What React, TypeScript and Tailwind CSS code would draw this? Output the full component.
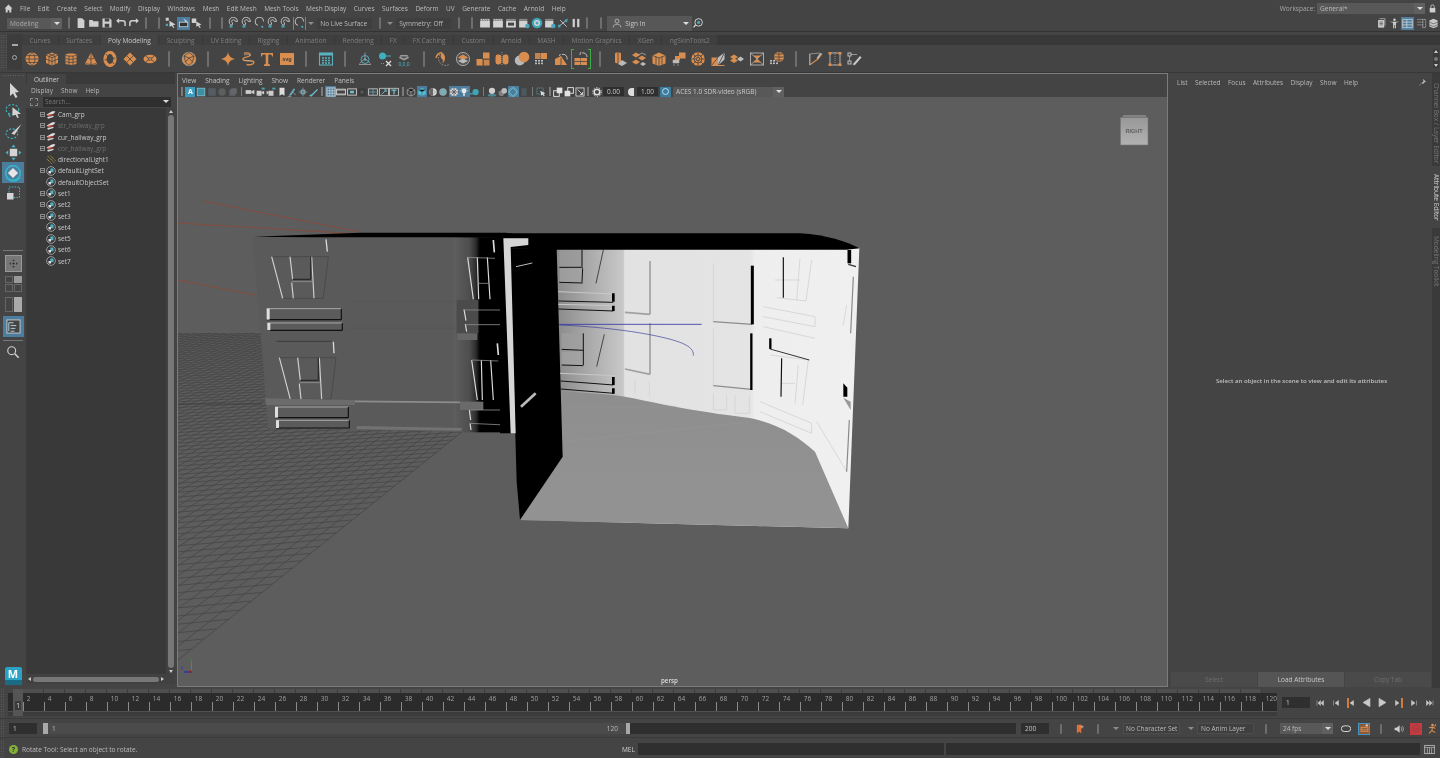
import React from "react";

const OR = "#d98e4f";
const DK = "#444444";
const TEAL = "#3fb7c6";

const menus = ["File","Edit","Create","Select","Modify","Display","Windows","Mesh","Edit Mesh","Mesh Tools","Mesh Display","Curves","Surfaces","Deform","UV","Generate","Cache","Arnold","Help"];
const tabs = ["Curves","Surfaces","Poly Modeling","Sculpting","UV Editing","Rigging","Animation","Rendering","FX","FX Caching","Custom","Arnold","MASH","Motion Graphics","XGen","ngSkinTools2"];

function S({ children, size = 16, vb = 16, className = "" }: { children: React.ReactNode; size?: number; vb?: number; className?: string }) {
  return <svg width={size} height={size} viewBox={`0 0 ${vb} ${vb}`} className={`shrink-0 ${className}`}>{children}</svg>;
}

function Sep({ h = "h-[12px]" }: { h?: string }) {
  return <div className={`w-[2px] ${h} bg-[#6e6e6e] rounded-sm`} />;
}

function ShelfIcon({ k }: { k: string }) {
  const ln = { stroke: DK, strokeWidth: 0.8, fill: "none" };
  switch (k) {
    case "sphere": return <S><circle cx="8" cy="8" r="6.5" fill={OR} /><path d="M1.6 8h12.8M2.6 4.6h10.8M2.6 11.4h10.8M8 1.5c-4 3-4 10 0 13M8 1.5c4 3 4 10 0 13" {...ln} /></S>;
    case "cube": return <S><path d="M8 1.5l6 2.6v7.8l-6 2.6-6-2.6V4.100z" fill={OR} /><path d="M2 4.100l6 2.600 6-2.600M8 6.700v7.800M2 8l6 2.500L14 8M5 5.400v7.500M11 5.400v7.500M5 2.800l6 2.600M11 2.800L5 5.400" {...ln} /></S>;
    case "cyl": return <S><path d="M2.500 3.500C2.500 2 13.500 2 13.500 3.500v9c0 1.800-11 1.800-11 0z" fill={OR} /><path d="M2.500 3.800c0 1.800 11 1.800 11 0M2.500 7c0 1.800 11 1.800 11 0M2.500 10c0 1.800 11 1.800 11 0M6 5v9M10 5v9" {...ln} /></S>;
    case "cone": return <S><path d="M8 1.500L14 12.500c0 2-12 2-12 0z" fill={OR} /><path d="M8 1.500v12.500M5 7c1 1.200 5 1.200 6 0M2.500 12c1 1.800 10 1.800 11 0" {...ln} /></S>;
    case "torus": return <S><ellipse cx="8" cy="8" rx="5" ry="6.500" fill="none" stroke={OR} strokeWidth="3.200" /><path d="M4 3l2 2.500M12 13l-2-2.500M2.500 9l3-.5M13.500 7l-3 .5" {...ln} /></S>;
    case "plane": return <S><path d="M8 1.500L14.500 8 8 14.500 1.500 8z" fill={OR} /><path d="M4.800 4.800l6.400 6.400M11.200 4.800l-6.400 6.400" {...ln} /></S>;
    case "disc": return <S><ellipse cx="8" cy="8" rx="6.500" ry="4.200" fill={OR} /><ellipse cx="8" cy="8" rx="2" ry="1.300" {...ln} /><path d="M3.500 5l3 2M12.500 5l-3 2M3.500 11l3-2M12.500 11l-3-2" {...ln} /></S>;
    case "ball": return <S><circle cx="8" cy="8" r="6.800" fill={OR} stroke="#aaa" strokeWidth=".6" /><path d="M8 1.500L3 5l1.500 6L8 14.500l3.500-3.500L13 5zM3 5l5 2 5-2M8 7l-3.500 4M8 7l3.500 4" {...ln} /></S>;
    case "star": return <S><path d="M8 .8c.6 4.200 2.400 6.200 7 7.200-4.600 1-6.400 3-7 7.200-.6-4.200-2.400-6.200-7-7.200 4.600-1 6.400-3 7-7.200z" fill={OR} /></S>;
    case "swirl": return <S><path d="M4 2.500c3-1.500 7 0 6 2S2 6 3 8.500s9 0 10.500 2-2 4-7 3" fill="none" stroke={OR} strokeWidth="1.400" /><path d="M4 4c3-1 6 0 7 .5M4 9.500c3 0 6 0 8 1.500" fill="none" stroke="#b6b6b6" strokeWidth=".6" /></S>;
    case "T": return <S><path d="M2 2h12v3.500h-1c0-1.200-.5-2-1.500-2H9.300v9.500l1.700.6V15H5v-1.400l1.700-.6V3.500H4.500c-1 0-1.500.8-1.500 2H2z" fill={OR} /></S>;
    case "svg": return <S><rect x="1" y="2" width="14" height="12" fill={OR} /><text x="8" y="10" fontSize="5.500" textAnchor="middle" fill="#3b3b3b" fontWeight="700" fontFamily="Liberation Sans, sans-serif">svg</text></S>;
    case "cal": return <S><rect x="1.500" y="2" width="13" height="12" fill="none" stroke="#58b2c2" strokeWidth="1.100" /><rect x="1.500" y="2" width="13" height="2.500" fill="#58b2c2" /><path d="M4 7h2M7 7h2M10 7h2M4 9.500h2M7 9.500h2M10 9.500h2M4 12h2M7 12h2M10 12h2" stroke="#58b2c2" strokeWidth="1.300" /></S>;
    case "loc": return <S><path d="M8 1.500v6M8 7.500l-5.500 5M8 7.500l5.500 5M2 13.500h12" stroke="#b5b5b5" strokeWidth=".7" fill="none" /><circle cx="8" cy="8.500" r="4" fill="none" stroke="#58b2c2" strokeWidth=".9" /><circle cx="8" cy="8.500" r="1.200" fill="#58b2c2" /></S>;
    case "pin": return <S><circle cx="5.500" cy="5" r="3.500" fill="#3fb0c0" /><path d="M5.500 5H14" stroke="#3fb0c0" /><path d="M9 10l5 5M14 10l-5 5" stroke="#ddd" strokeWidth="1.300" /><path d="M4 12.500h3" stroke="#3fb0c0" strokeDasharray="1 1" /></S>;
    case "xf": return <S><path d="M8 1.500v4M4 5.500l4 2 4-2M4.500 4h7l1.500 3-5 2.500L3 7z" fill="#9c9c9c" /><text x="8" y="15" fontSize="5" textAnchor="middle" fill="#4fb0c0" fontFamily="Liberation Sans, sans-serif">0,0,0</text></S>;
    case "crescent": return <S><path d="M7 1.500a6.500 6.500 0 0 1 0 11c1-2 1.500-3 0-4.500-1.500-1.500-2-3 0-6.500z" fill={OR} /><path d="M7 1.500a6.500 6.500 0 1 0 7 12" fill="none" stroke="#b9b9b9" strokeWidth=".8" strokeDasharray="1.400 1.400" /><path d="M1 7a7 7 0 0 1 6-5.500" stroke={OR} fill="none" strokeWidth="1.500" /></S>;
    case "sep2": return <S><circle cx="8" cy="8" r="6.600" fill="#555" stroke="#bbb" strokeWidth=".8" /><path d="M8 3.500L13 6.500 8 9 3 6.500z" fill={OR} /><path d="M8 7.500L13 10 8 12.500 3 10z" fill="#b9b9b9" /></S>;
    case "blocks": return <S><rect x="8" y="1.500" width="6.500" height="6.500" fill={OR} /><rect x="1.500" y="8" width="6.500" height="6.500" fill={OR} /><rect x="8.500" y="8.500" width="6" height="6" fill={OR} opacity=".9" /><path d="M8 8v6.500M8 8h6.500" {...ln} /></S>;
    case "cylcut": return <S><rect x="1.500" y="3.500" width="5.800" height="10" rx="2.400" fill={OR} /><rect x="8.700" y="3.500" width="5.800" height="10" rx="2.400" fill={OR} /><path d="M8 1v14" stroke="#c0c0c0" strokeWidth=".6" strokeDasharray="1 1" /></S>;
    case "union": return <S><circle cx="5.800" cy="9.500" r="5" fill="#b9b9b9" /><circle cx="10" cy="6" r="5.300" fill={OR} /></S>;
    case "gridq": return <S><rect x="7.500" y="2" width="6.500" height="6" fill={OR} /><rect x="2" y="2" width="5" height="6" fill={OR} opacity=".85" /><g fill="#bcbcbc"><rect x="2" y="9" width="2" height="1.600" /><rect x="5" y="9" width="2" height="1.600" /><rect x="8" y="9" width="2" height="1.600" /><rect x="2" y="11.600" width="2" height="1.600" /><rect x="5" y="11.600" width="2" height="1.600" /><rect x="8" y="11.600" width="2" height="1.600" /></g></S>;
    case "rot": return <S><path d="M2 14L2 8l6-3 6 9z" fill={OR} /><path d="M8 14V7" {...ln} /><path d="M9 3.500a4 4 0 0 1 5 5M6.500 5a4 4 0 0 1 1-2" fill="none" stroke="#c9c9c9" strokeWidth=".9" /></S>;
    case "rotg": return <svg width="20" height="20" viewBox="0 0 20 20" className="shrink-0"><path d="M1 1H0v18h1zM19 1h1v18h-1zM0 0h3v1H0zM17 0h3v1h-3zM0 19h3v1H0zM17 19h3v1h-3z" fill="#3fae49" /><rect x="3.500" y="9" width="6" height="7" fill={OR} /><rect x="10" y="9" width="6" height="7" fill={OR} /><path d="M3.500 12.500h12.500" {...ln} /><path d="M11 4a4 4 0 0 1 5 4M9 6a4 4 0 0 1 1-3" fill="none" stroke="#c9c9c9" strokeWidth=".9" /></svg>;
    case "pipe": return <S><path d="M3 2.500c0-1.200 6-1.200 6 0v9c0 1-6 1-6 0z" fill={OR} /><path d="M6 1.500v11" {...ln} /><path d="M6 13l4-4 5 3-5 3z" fill="#b9b9b9" /></S>;
    case "stack": return <S><path d="M1 4l4-2.500 4 2.500-4 2.500z" fill={OR} /><path d="M7 7l4-2.500L15 7l-4 2.500z" fill={OR} /><path d="M1 11l4-2.500L9 11l-4 2.500z" fill={OR} /><path d="M7 4l4-2 4 2" stroke="#ccc" strokeWidth=".6" fill="none" /><path d="M9 13l3-2 3 2-3 2z" fill="#bbb" /></S>;
    case "box3": return <S><path d="M8 1.500l6.500 3v8L8 15l-6.500-2.500v-8z" fill={OR} /><path d="M1.500 4.500L8 7l6.500-2.500M8 7v8M5 5.800v8M11 5.800v8" {...ln} /></S>;
    case "chair": return <S><rect x="8" y="1.500" width="6.500" height="6" fill={OR} /><rect x="4" y="5" width="5" height="4" fill={OR} /><path d="M2 9h6v3H2zM3 13v2M7 13v2" fill="#bcbcbc" stroke="#bcbcbc" strokeWidth=".5" /></S>;
    case "soccer": return <S><circle cx="8" cy="8" r="6.800" fill={OR} /><circle cx="8" cy="8" r="4" {...ln} /><circle cx="8" cy="8" r="1.600" {...ln} /><path d="M8 1.200v5M8 9.800v5M1.200 8h5M9.800 8h5M3 3l3.500 3.500M13 3L9.500 6.500M3 13l3.500-3.500M13 13L9.500 9.500" {...ln} /></S>;
    case "split": return <S><path d="M1.500 14.500V6.500L8 6.500v8z" fill={OR} /><path d="M8 6.500l6.500-5v7L8 14.500z" fill="#bdbdbd" /><path d="M1.500 14.500L8 6.500M8 14.500l6.500-13" {...ln} /><path d="M1.500 14.500h13" stroke={OR} /></S>;
    case "diam": return <S><path d="M1 6l4-2.500L9 6 5 8.500z" fill={OR} /><path d="M1 9.500l4-2.500 4 2.500L5 12z" fill={OR} /><path d="M8 8l3.500-2.500L15 8l-3.500 2.500z" fill="#bdbdbd" /></S>;
    case "xbox": return <S><rect x="1.500" y="2" width="13" height="12" fill="none" stroke="#c2c2c2" strokeWidth=".8" /><path d="M1.500 2l13 12M14.500 2l-13 12" stroke="#c2c2c2" strokeWidth=".7" /><path d="M8 8L4 4.500h8z" fill={OR} /><path d="M8 8l-4 3.500h8z" fill={OR} /></S>;
    case "globe": return <S><circle cx="10" cy="6" r="5" fill={OR} /><path d="M5 6h10M10 1v10M6.500 3h7M6.500 9h7" {...ln} /><g fill="#bcbcbc"><rect x="1" y="9" width="2" height="1.600" /><rect x="4" y="9" width="2" height="1.600" /><rect x="1" y="11.500" width="2" height="1.600" /><rect x="4" y="11.500" width="2" height="1.600" /><rect x="7" y="11.500" width="2" height="1.600" /></g></S>;
    case "pen1": return <S><path d="M1.500 14L10 8M10 8l4-5" stroke={OR} strokeWidth="1.100" /><path d="M10 8l4-6-2 .2-3.500 5z" fill="#bdbdbd" /><rect x="1" y="3" width="1.500" height="11" fill="#9a9a9a" /><path d="M1.500 3L12 2" stroke="#bdbdbd" strokeWidth=".6" /></S>;
    case "frame": return <S><rect x="3" y="2" width="10" height="12" fill="none" stroke="#bdbdbd" strokeWidth=".9" /><path d="M8 1v14" stroke="#bdbdbd" strokeWidth=".6" strokeDasharray="1 1" /><g fill={OR}><rect x="1.500" y="1" width="3" height="2.500" /><rect x="11.500" y="1" width="3" height="2.500" /><rect x="1.500" y="12.500" width="3" height="2.500" /><rect x="11.500" y="12.500" width="3" height="2.500" /></g></S>;
    case "pen2": return <S><rect x="1" y="2" width="3" height="3" fill="none" stroke="#bdbdbd" /><rect x="1" y="10" width="3" height="3" fill="none" stroke="#bdbdbd" /><path d="M4 3.500h6M2.500 5v5" stroke="#bdbdbd" strokeWidth=".7" /><path d="M6 13l7-8 1.500 1.500-7 8z" fill="#c9c9c9" /><path d="M5.500 14l.5-1.500 1.500 1.500z" fill={OR} /></S>;
    default: return null;
  }
}

const shelfItems = ["sphere","cube","cyl","cone","torus","plane","disc","|","ball","|","star","swirl","T","svg","|","cal","|","loc","pin","xf","|","crescent","sep2","blocks","cylcut","union","gridq","rot","rotg","|","pipe","stack","box3","chair","soccer","split","diam","xbox","globe","|","pen1","frame","pen2"];

function Mini({ k }: { k: string }) {
  const c = "#bdbdbd";
  switch (k) {
    case "file": return <S size={12}><path d="M3.500 1.500h6l3 3v10h-9z" fill="#d0d0d0" /></S>;
    case "open": return <S size={12}><path d="M1.500 4h4.500l1 1.500h7V13h-12.500z" fill="#cfcfcf" /></S>;
    case "save": return <S size={12}><path d="M2 2h10l2 2v10H2z" fill="#cfcfcf" /><rect x="5" y="2" width="6" height="4" fill="#444" /><rect x="5" y="9" width="6" height="5" fill="#444" /></S>;
    case "undo": return <S size={12}><path d="M13.500 12V8c0-2-1-3-3-3H3" fill="none" stroke="#cfcfcf" strokeWidth="2" /><path d="M5.500 1.500L1.500 5l4 3.500z" fill="#cfcfcf" /></S>;
    case "redo": return <S size={12}><path d="M2.500 12V8c0-2 1-3 3-3H13" fill="none" stroke="#cfcfcf" strokeWidth="2" /><path d="M10.500 1.500l4 3.500-4 3.500z" fill="#cfcfcf" /></S>;
    case "sel1": return <S size={12}><rect x="1" y="1" width="4" height="4" fill="#cfcfcf" /><path d="M6 5l8 5-3.500 1 2 3-1.500.8-2-3L6 13z" fill="#cfcfcf" /><rect x="1" y="9" width="3" height="3" fill="#4ba4b8" /></S>;
    case "sel2": return <S size={12}><path d="M7 2l6 4-2.500.8 1.500 2.500" fill="#dcdcdc" /><rect x="2" y="7" width="11" height="6" fill="#333" stroke="#d8d8d8" /></S>;
    case "sel3": return <S size={12}><rect x="1" y="2" width="6" height="6" fill="#cfcfcf" /><path d="M7 6l7 4-3 1 2 3-1.500.8-2-3L7 13z" fill="#cfcfcf" /></S>;
    case "mag": return <S size={12}><path d="M4 9a5.500 5.500 0 1 1 9 0l-2.500-2a2.300 2.300 0 1 0-4 0z" fill="none" stroke={c} strokeWidth="1.200" transform="rotate(-35 8 8)" /><rect x="2" y="11" width="4" height="3" fill="#4ba4b8" /></S>;
    case "play3": return <S size={12}><path d="M4 9a5.500 5.500 0 1 1 9 0" fill="none" stroke={c} strokeWidth="1.300" transform="rotate(-35 8 8)" /><circle cx="11" cy="13" r="1.500" fill="#4ba4b8" /></S>;
    case "clap": return <S size={12}><rect x="1.500" y="5" width="13" height="9" fill="#d2d2d2" /><path d="M1.500 2.500h13V5h-13z" fill="#888" /><path d="M3 2.500l1 2.500M6 2.500l1 2.500M9 2.500l1 2.500M12 2.500l1 2.500" stroke="#e6e6e6" /></S>;
    case "clapd": return <S size={12}><rect x="1.500" y="5" width="13" height="9" fill="#d2d2d2" /><path d="M1.500 2.500h13V5h-13z" fill="#888" /><rect x="4" y="7.500" width="8" height="4" fill="#444" /></S>;
    case "clapg": return <S size={12}><rect x="1.500" y="5" width="11" height="9" fill="#d2d2d2" /><path d="M1.500 2.500h11V5h-11z" fill="#888" /><circle cx="12.500" cy="12" r="3" fill="#4ba4b8" /></S>;
    case "disc": return <S size={12}><circle cx="8" cy="8" r="7" fill="#3ea6b6" /><circle cx="8" cy="8" r="4" fill="#d7d7d7" /><circle cx="8" cy="8" r="2" fill="#3ea6b6" /></S>;
    case "branch": return <S size={12}><path d="M2 13L14 3M4 4l9 9" stroke="#d0d0d0" strokeWidth="1.100" /><circle cx="3" cy="12" r="2" fill="#3ea6b6" /><circle cx="12" cy="5" r="2" fill="#3ea6b6" /></S>;
    case "pause": return <S size={12}><rect x="3.500" y="2.500" width="3" height="11" fill="#cfcfcf" /><rect x="9.500" y="2.500" width="3" height="11" fill="#cfcfcf" /></S>;
    default: return null;
  }
}

function Tiny({ k }: { k: string }) {
  switch (k) {
    case "A": return <div className="w-[10px] h-[10px] bg-[#3c9cc0] flex items-center justify-center text-[7px] font-bold text-white leading-none">A</div>;
    case "sq": return <S size={10}><rect x="2" y="2" width="12" height="12" fill="#3c8fa2" stroke="#77bccb" strokeWidth="1.500" /></S>;
    case "dimsq": return <S size={10}><rect x="2" y="2" width="12" height="12" fill="#545c66" /></S>;
    case "dimsp": return <S size={10}><circle cx="8" cy="8" r="6" fill="#5b5f60" /></S>;
    case "dimim": return <S size={10}><rect x="2" y="4" width="10" height="10" fill="#5d6368" /><rect x="5" y="2" width="9" height="9" fill="#666" /></S>;
    case "cam": return <S size={10}><rect x="1" y="5" width="9" height="6" fill="#cdcdcd" /><path d="M10 7l5-2.500v7L10 9z" fill="#cdcdcd" /></S>;
    case "cam2": return <S size={10}><rect x="1" y="6" width="8" height="8" fill="#cdcdcd" /><path d="M9 8l4-2v6l-4-2z" fill="#cdcdcd" /><rect x="9" y="1" width="5" height="3" fill="#4ea4b6" /></S>;
    case "cam3": return <S size={10}><rect x="4" y="6" width="8" height="8" fill="#cdcdcd" /><path d="M4 8L1 6v6l3-2z" fill="#cdcdcd" /><rect x="10" y="1" width="5" height="3" fill="#4ea4b6" /></S>;
    case "book": return <S size={10}><path d="M4 1h8v13l-4-2.500L4 14z" fill="#dcdcdc" /></S>;
    case "pen": return <S size={10}><path d="M3 13L11 2l2 2-7 10z" fill="#5eb0c2" /><path d="M1 15h6" stroke="#bbb" /><path d="M9 8l5 5" stroke="#bbb" /></S>;
    case "cross": return <S size={10}><path d="M8 1v14M1 8h14" stroke="#5eb0c2" strokeWidth="1.300" /><rect x="5" y="5" width="6" height="6" fill="none" stroke="#ccc" /></S>;
    case "brush": return <S size={10}><path d="M2 14L13 3l1.500 1.500L4 15z" fill="#6cc0d0" /><circle cx="2.500" cy="13.500" r="1.500" fill="#6cc0d0" /></S>;
    case "grid": return <S size={10}><rect x="1.500" y="1.500" width="13" height="13" fill="none" stroke="#dcdcdc" strokeWidth="1.300" /><path d="M6 2v12M10 2v12M2 6h12M2 10h12" stroke="#dcdcdc" /></S>;
    case "film": return <S size={10}><rect x="1" y="3.500" width="14" height="9" fill="none" stroke="#dcdcdc" strokeWidth="1.400" /><path d="M1 5h14M1 11h14" stroke="#dcdcdc" /></S>;
    case "fr": return <S size={10}><rect x="1" y="3" width="14" height="10" fill="none" stroke="#dcdcdc" strokeWidth="1.300" /><rect x="5" y="6" width="6" height="4" fill="#6fc2d2" /></S>;
    case "dark": return <S size={10}><rect x="2" y="2" width="12" height="12" rx="2" fill="#3a3a3a" /><circle cx="8" cy="8" r="3" fill="#555" /></S>;
    case "safe": return <S size={10}><rect x="1" y="3" width="14" height="10" fill="none" stroke="#dcdcdc" strokeWidth="1.200" /><path d="M8 3v10M1 8h14" stroke="#6fc2d2" /></S>;
    case "exp": return <S size={10}><rect x="1" y="2" width="14" height="12" fill="none" stroke="#dcdcdc" strokeWidth="1.200" /><path d="M4 12l7-7M8 4.500h3.500V8" stroke="#6fc2d2" strokeWidth="1.400" fill="none" /></S>;
    case "tt": return <S size={10}><rect x="1" y="2" width="14" height="12" fill="none" stroke="#dcdcdc" strokeWidth="1.200" /><path d="M4 5h8M8 5v7" stroke="#6fc2d2" strokeWidth="2" /></S>;
    case "wire": return <S size={10}><path d="M8 1.500l6 3v7l-6 3-6-3v-7z" fill="none" stroke="#bcbcbc" /><path d="M2 4.500l6 3 6-3M8 7.500v7" stroke="#bcbcbc" /></S>;
    case "solid": return <S size={10}><path d="M8 1.500l6 3v7l-6 3-6-3v-7z" fill="#56bcd0" /><path d="M2 4.500l6 3 6-3M8 7.500v7" stroke="#2d6b7a" /></S>;
    case "half": return <S size={10}><circle cx="8" cy="8" r="6" fill="#dcdcdc" /><path d="M8 2a6 6 0 0 0 0 12z" fill="#666" /><path d="M8 4l4 4-4 4" fill="none" stroke="#888" /></S>;
    case "tex": return <S size={10}><circle cx="8" cy="8" r="6" fill="#8fa4a8" /><path d="M2 8h12M8 2v12M4 4l8 8" stroke="#5fbdcc" /></S>;
    case "chk": return <S size={10}><circle cx="8" cy="8" r="6.500" fill="#dcdcdc" /><path d="M4 4l8 8M12 4l-8 8M8 1.500v13M1.500 8h13" stroke="#555" strokeWidth="1.300" /></S>;
    case "bulb": return <S size={10}><circle cx="8" cy="6" r="4" fill="#e8e8e8" /><rect x="6.500" y="10" width="3" height="4" fill="#ddd" /><path d="M1 6h2M13 6h2M3 1.500l1.500 1.500M13 1.500L11.500 3" stroke="#ddd" /></S>;
    case "teal": return <S size={10}><circle cx="9" cy="8" r="5" fill="#3ea6b6" /><path d="M0 11h5" stroke="#3ea6b6" strokeWidth="2" /></S>;
    case "ground": return <S size={10}><circle cx="8" cy="6" r="5" fill="#cfcfcf" /><ellipse cx="8" cy="13" rx="7" ry="2" fill="#4d8897" /></S>;
    case "ghost": return <S size={10}><circle cx="5.500" cy="10" r="4.500" fill="#818181" /><circle cx="10" cy="6" r="4.500" fill="#bbb" /></S>;
    case "hex": return <S size={10}><path d="M8 1l6.500 7L8 15 1.500 8z" fill="none" stroke="#74c3d4" strokeWidth="1.300" /><circle cx="8" cy="8" r="6.800" fill="none" stroke="#74c3d4" /></S>;
    case "dimdk": return <S size={10}><rect x="4" y="2" width="8" height="12" fill="#4c5a5e" /></S>;
    case "selc": return <S size={10}><rect x="1.500" y="1.500" width="10" height="10" fill="none" stroke="#5eb0c2" strokeDasharray="2 1" /><path d="M7 6l8 4-3 1 2 3-1.500 1-2-3-2 2z" fill="#dcdcdc" /></S>;
    case "dup": return <S size={10}><rect x="1" y="6" width="9" height="9" fill="none" stroke="#e2e2e2" strokeWidth="1.500" /><rect x="6" y="1" width="9" height="9" fill="#e2e2e2" /></S>;
    case "dup2": return <S size={10}><rect x="1" y="6" width="9" height="9" fill="#e2e2e2" /><rect x="6" y="1" width="9" height="9" fill="none" stroke="#e2e2e2" strokeWidth="1.500" /></S>;
    case "dup3": return <S size={10}><rect x="1.500" y="1.500" width="13" height="13" fill="none" stroke="#e2e2e2" strokeWidth="1.300" /><path d="M4 4l8 8M8 12h4V8" stroke="#e2e2e2" strokeWidth="1.300" fill="none" /></S>;
    case "gear": return <S size={10}><circle cx="8" cy="8" r="4.500" fill="none" stroke="#e0e0e0" strokeWidth="2.500" /><circle cx="8" cy="8" r="7" fill="none" stroke="#e0e0e0" strokeWidth="1.500" strokeDasharray="2 2.400" /></S>;
    default: return null;
  }
}

type VT = { k: string; sel?: boolean };
const vt: VT[] = [{k:"|"},{k:"A"},{k:"sq"},{k:"dimsq"},{k:"dimsp"},{k:"dimim"},{k:"|"},{k:"cam"},{k:"cam2"},{k:"cam3"},{k:"book"},{k:"pen"},{k:"cross"},{k:"brush"},{k:"|"},{k:"grid",sel:true},{k:"film"},{k:"fr"},{k:"dark"},{k:"safe"},{k:"exp"},{k:"tt"},{k:"|"},{k:"wire"},{k:"solid",sel:true},{k:"half"},{k:"tex"},{k:"chk",sel:true},{k:"bulb",sel:true},{k:"teal"},{k:"|"},{k:"ground"},{k:"ghost"},{k:"hex",sel:true},{k:"dimdk"},{k:"|"},{k:"selc"},{k:"|"},{k:"dup"},{k:"dup2"},{k:"dup3"},{k:"|"},{k:"gear"}];

function Tool({ children, sel }: { children: React.ReactNode; sel?: boolean }) {
  return <div className={`w-[22px] h-[20.600px] flex items-center justify-center ${sel ? "bg-[#4d7d9c]" : ""}`}>{children}</div>;
}

function Grip({ className = "" }: { className?: string }) {
  return <div className={`bg-[radial-gradient(#6b6b6b_0.6px,transparent_0.7px)] bg-[length:2.500px_2.500px] ${className}`} />;
}

function Combo({ text, cls, arrow = true }: { text: string; cls: string; arrow?: boolean }) {
  return (
    <div className={`flex items-center bg-[#585858] ${cls}`}>
      <span className="flex-1 pl-[3px] whitespace-nowrap">{text}</span>
      {arrow && <span className="w-[11px] h-full bg-[#606060] flex items-center justify-center"><span className="w-0 h-0 border-x-[3px] border-x-transparent border-t-[3px] border-t-[#ddd]" /></span>}
    </div>
  );
}

function Arrow() {
  return <span className="block w-0 h-0 border-x-[3px] border-x-transparent border-t-[3px] border-t-[#8b8b8b]" />;
}

const outl = [
  { n: "Cam_grp", t: "grp", p: 1 }, { n: "str_hallway_grp", t: "grp", p: 1, d: 1 }, { n: "cur_hallway_grp", t: "grp", p: 1 }, { n: "cor_hallway_grp", t: "grp", p: 1, d: 1 },
  { n: "directionalLight1", t: "light" }, { n: "defaultLightSet", t: "set", p: 1 }, { n: "defaultObjectSet", t: "set" }, { n: "set1", t: "set", p: 1 }, { n: "set2", t: "set", p: 1 }, { n: "set3", t: "set", p: 1 }, { n: "set4", t: "set" }, { n: "set5", t: "set" }, { n: "set6", t: "set" }, { n: "set7", t: "set" },
];

function OutIcon({ t }: { t: string }) {
  if (t === "grp") return <S size={10}><path d="M1 7l9-5h5l-2 3-9 5z" fill="#e0e0e0" /><path d="M1 8l11-2-2 3H3z" fill="#c0392f" /><path d="M2 11l10-2v2l-9 3z" fill="#d8d8d8" /></S>;
  if (t === "light") return <S size={10}><path d="M3 2l10 10M7 1l8 8M1 6l8 8" stroke="#d9c83a" strokeWidth="1.300" strokeDasharray="2 1.200" /></S>;
  return <S size={10}><circle cx="8" cy="8" r="7" fill="none" stroke="#cfcfcf" /><rect x="7" y="4" width="5" height="6" fill="#4fb2c6" /><rect x="4" y="8" width="4" height="4" fill="#e0e0e0" /></S>;
}

function Scene() {
  const VP1 = [5640, 100], VP2 = [875, 100], O = [178, 660], a = 0.0037, b = 0.0196;
  const P = (u: number, v: number) => {
    const w = 1 + a * u + b * v;
    return [(a * u * VP1[0] + b * v * VP2[0] + O[0]) / w, (a * u * VP1[1] + b * v * VP2[1] + O[1]) / w];
  };
  const lines: string[] = [];
  const vMax = 110;
  for (let v = 0; v <= vMax; v++) { const p = P(-80, v), q = P(0, v); lines.push(`M${p[0].toFixed(1)} ${p[1].toFixed(1)}L${q[0].toFixed(1)} ${q[1].toFixed(1)}`); }
  for (let u = -80; u <= 0; u++) { const p = P(u, 0), q = P(u, vMax); lines.push(`M${p[0].toFixed(1)} ${p[1].toFixed(1)}L${q[0].toFixed(1)} ${q[1].toFixed(1)}`); }
  const W1 = ({ dx = 0, dy = 0 }: { dx?: number; dy?: number }) => (
    <g transform={`translate(${dx} ${dy})`} fill="none">
      <path d="M95 110H265M265 110L250 235M128 235H250" stroke="#4a4a4a" strokeWidth="3" />
      <path d="M95 110L128 235M150 110L158 178M215 110L222 235M155 188L160 235" stroke="#d0d0d0" strokeWidth="3.500" />
      <path d="M158 178H212M212 110V178" stroke="#2a2a2a" strokeWidth="3.500" />
      <path d="M155 185H218" stroke="#8a8a8a" strokeWidth="3" />
    </g>
  );
  const Box = ({ x, y, w, h }: { x: number; y: number; w: number; h: number }) => (
    <g>
      <rect x={x} y={y} width={w} height={h} fill="#5b5b5b" />
      <path d={`M${x} ${y}H${x + w}`} stroke="#a8a8a8" strokeWidth="3" />
      <path d={`M${x} ${y + h}H${x + w}M${x + w} ${y}V${y + h}`} stroke="#111" strokeWidth="3.500" />
      <rect x={x} y={y} width="9" height={h} fill="#dedede" />
    </g>
  );
  return (
    <svg className="w-full h-full block" viewBox="178 97 989 589" preserveAspectRatio="none">
      <defs>
        <linearGradient id="side" x1="0" x2="1" y1="0" y2="0"><stop offset="0" stopColor="#5e5e5e" /><stop offset=".3" stopColor="#4e4e4e" /><stop offset=".42" stopColor="#2e2e2e" /><stop offset=".5" stopColor="#000" /><stop offset="1" stopColor="#000" /></linearGradient>
        <linearGradient id="inner" x1="170" x2="1078" y1="0" y2="0" gradientUnits="userSpaceOnUse"><stop offset="0" stopColor="#8a8a8a" /><stop offset=".08" stopColor="#a2a2a2" /><stop offset=".22" stopColor="#c8c8c8" /><stop offset=".225" stopColor="#e2e2e2" /><stop offset=".64" stopColor="#e4e4e4" /><stop offset=".655" stopColor="#eeeeee" /><stop offset="1" stopColor="#f0f0f0" /></linearGradient>
        <linearGradient id="floor" x1="0" x2="0" y1="0" y2="1"><stop offset="0" stopColor="#8e8e8e" /><stop offset="1" stopColor="#939393" /></linearGradient>
        <linearGradient id="cube" x1="0" x2="0" y1="0" y2="1"><stop offset="0" stopColor="#989898" /><stop offset="1" stopColor="#b2b2b2" /></linearGradient>
        <clipPath id="gridclip"><rect x="178" y="333" width="400" height="350" /></clipPath>
      </defs>
      <rect x="178" y="97" width="989" height="589" fill="#5d5d5d" />
      <g clipPath="url(#gridclip)">
        <path d={lines.join("")} stroke="#464646" strokeWidth=".75" fill="none" />
        <path d="M178 404H262" stroke="#3c3c3c" strokeWidth=".8" />
      </g>
      <path d="M178 223L360 234M203 201L360 232M178 280L255 295" stroke="#8a4a3a" strokeWidth=".9" />

      <path d="M253 237H460L468 432 268 428z" fill="#5a5a5a" />
      <g transform="translate(240 220) scale(.33333)">
        <rect x="640" y="52" width="160" height="585" fill="url(#side)" />
        <rect x="650" y="240" width="65" height="100" fill="#4b4b4b" />
        <rect x="652" y="340" width="60" height="20" fill="#666" />
        <rect x="660" y="545" width="70" height="25" fill="#6a6a6a" />
        <path d="M320 245H645M320 325H645" stroke="#565656" strokeWidth="2" />
        <path d="M40 50L360 38H800V54L640 52H200z" fill="#000" />
        <W1 />
        <W1 dx={23} dy={303} />
        <path d="M258 58L262 95M280 365L282 400" stroke="#d8d8d8" strokeWidth="4" />
        <path d="M110 364H275" stroke="#3c3c3c" strokeWidth="3" />
        <Box x={80} y={266} w={224} h={33} />
        <Box x={82} y={309} w={225} h={22} />
        <path d="M75 535L345 540V555L78 555z" fill="#6b6b6b" />
        <path d="M345 544L660 547" stroke="#8c8c8c" strokeWidth="5" />
        <path d="M350 618L665 624V632L350 628z" fill="#727272" />
        <Box x={105} y={561} w={220} h={32} />
        <Box x={108} y={601} w={220} h={23} />
        <g fill="none" stroke="#dcdcdc" strokeWidth="3.500">
          <path d="M683 112L700 238M712 112L716 238M742 112L750 238M672 268L678 302M676 312L680 335M695 420L712 540M724 420L727 540M752 420L760 540M688 570L692 600M690 610L693 630" />
          <path d="M760 60L763 97M772 370L775 405" strokeWidth="5" />
        </g>
        <path d="M682 112L765 115M695 420L775 423M672 270H785M676 314H785M688 570H795M690 610L795 615M712 190H745" stroke="#8a8a8a" strokeWidth="2.500" fill="none" />
      </g>

      <g transform="translate(500 225) scale(.33333)">
        <path d="M0 25H34V625H0z" fill="#000" />
        <path d="M170 70H1078L1045 910 60 885z" fill="url(#inner)" />
        <path d="M182 498C260 505 310 505 375 515C450 530 520 545 600 558C680 572 740 575 775 585C850 605 900 640 945 680L1045 910L60 885L188 695z" fill="url(#floor)" />
        <path d="M188 550L530 545M188 650L750 590" stroke="#999" strokeWidth="6" opacity=".22" />
        <path d="M0 25H900C980 30 1040 50 1078 70L1040 74H170L30 70L0 60z" fill="#000" />
        <path d="M30 70H170L188 695L60 885L50 770z" fill="#000" />
        <path d="M10 40H85V60L32 66L47 625H32z" fill="#d6d6d6" />
        <path d="M48 125L97 114" stroke="#bbb" strokeWidth="3" />
        <path d="M63 545L107 505" stroke="#bbb" strokeWidth="8" />
        <rect x="178" y="75" width="70" height="52" fill="#9a9a9a" opacity=".7" />
        <rect x="180" y="130" width="68" height="42" fill="#a2a2a2" opacity=".7" />
        <rect x="185" y="325" width="65" height="48" fill="#a0a0a0" opacity=".7" />
        <rect x="185" y="380" width="65" height="40" fill="#a4a4a4" opacity=".7" />
        <path d="M175 200L340 207M180 445L345 452M175 238L340 242" stroke="#c8c8c8" strokeWidth="3" fill="none" />
        <g stroke="#111" fill="none" strokeWidth="3">
          <path d="M246 75V125M178 127H248M248 130L246 172M178 172L248 174M175 228L340 232M175 252L340 258M250 325V420M185 373L250 376M185 420L250 422M182 468L340 480M182 492L342 505" />
          <path d="M310 75L288 175M313 328L290 425" stroke="#444" />
          <path d="M340 205V230M340 242V258M340 456V480M340 490V506" strokeWidth="8" stroke="#000" />
        </g>
        <g fill="none" stroke="#a0a0a0" strokeWidth="5">
          <path d="M450 108V268M375 262L450 268M450 295V448M375 432L450 448" />
        </g>
        <g fill="none" stroke="#d2d2d2" strokeWidth="2.500">
          <path d="M640 115V290M640 310V482M640 505V555H680V512M705 510V565H748V515M405 465V505M448 470V515M790 245L945 275V305L790 275M790 305L945 340M780 530L935 595V625L780 560M935 105L918 228L830 218M825 165H900M900 100L890 225M895 420L885 535M810 390L925 405L908 540M885 475H845M950 590L1040 740M1040 240L1030 300" />
        </g>
        <path d="M640 290L757 298M640 482L754 493" stroke="#8d8d8d" strokeWidth="4" />
        <path d="M757 122V298" stroke="#000" strokeWidth="9" />
        <path d="M754 325V495" stroke="#000" strokeWidth="7" />
        <path d="M850 97V218M845 400L843 515" stroke="#111" strokeWidth="3.500" />
        <path d="M811 340V372" stroke="#000" strokeWidth="7" />
        <path d="M810 372L928 405" stroke="#333" strokeWidth="3" />
        <path d="M1048 75V115" stroke="#000" strokeWidth="11" />
        <path d="M1045 118L1068 125" stroke="#333" strokeWidth="4" />
        <path d="M1060 155L1052 325M1048 585L1040 740" stroke="#888" strokeWidth="3.500" />
        <path d="M1030 475L1042 488V515H1030z" fill="#000" />
        <path d="M1030 518L1052 530V555z" fill="#999" />
        <path d="M178 298H605" stroke="#3535a8" strokeWidth="2.500" />
        <path d="M178 300C300 305 420 320 500 340C560 355 582 370 580 392" stroke="#3a3a9c" strokeWidth="2" fill="none" />
      </g>

      <g>
        <path d="M1123 116H1146" stroke="#a8a8a8" strokeWidth="1" />
        <rect x="1120.500" y="117.500" width="27.500" height="27.500" fill="url(#cube)" stroke="#777" strokeWidth=".6" />
      </g>
      <path d="M191.500 672V662" stroke="#2ea043" strokeWidth="1" />
      <path d="M191.500 672H184" stroke="#2424b0" strokeWidth="1.100" />
      <rect x="190" y="670.500" width="2" height="2" fill="#b02020" />
      <text x="190" y="661" fontSize="5" fill="#2ea043" fontFamily="Liberation Sans, sans-serif">y</text>
      <text x="181" y="670" fontSize="5" fill="#3030c0" fontFamily="Liberation Sans, sans-serif">z</text>
    </svg>
  );
}

export default function App() {
  return (
    <div className="w-[1440px] h-[758px] overflow-hidden flex flex-col bg-[#444444] text-[#bcbcbc] text-[6.5px] leading-[9px] font-['Open_Sans','Liberation_Sans',sans-serif] blur-[0.3px]">
      {/* Menu bar */}
      <div className="h-[15px] flex items-center pl-[4px] pt-[1px] shrink-0">
        <S size={9} className="mr-[3px]"><path d="M8 1L15 8h-2v7H9.500v-4h-3v4H3V8H1z" fill="#cfcfcf" /></S>
        <div className="flex gap-[7.500px] ml-[4px]">{menus.map((m) => <span key={m}>{m}</span>)}</div>
        <div className="ml-auto flex items-center pr-[3px]">
          <span className="mr-[2px] text-[#a8a8a8]">Workspace:</span>
          <Combo text="General*" cls="w-[108px] h-[11px]" />
          <S size={9} className="ml-[3px]"><rect x="3" y="7" width="10" height="8" fill="#cfcfcf" /><path d="M5 7V4.500a3 3 0 0 1 6 0V7" fill="none" stroke="#cfcfcf" strokeWidth="1.500" /></S>
        </div>
      </div>
      {/* Status line */}
      <div className="h-[17px] flex items-center pl-[7px] shrink-0 border-b border-[#333333]">
        <Combo text="Modeling" cls="w-[55px] h-[11px] text-[#a8a8a8]" />
        <div className="ml-[6px]"><Sep /></div>
        <div className="flex gap-[1.200px] ml-[5px]">{["file","open","save","undo","redo"].map((k) => <Mini key={k} k={k} />)}</div>
        <div className="ml-[5px]"><Sep /></div>
        <div className="ml-[11px]"><Sep /></div>
        <div className="flex ml-[5px] items-center"><Mini k="sel1" /><div className="bg-[#4d7d9c] w-[13px] h-[13px] mx-[0.500px] flex items-center justify-center"><Mini k="sel2" /></div><Mini k="sel3" /></div>
        <div className="ml-[6.500px]"><Sep /></div>
        <div className="ml-[10px]"><Sep /></div>
        <div className="flex gap-[1px] ml-[5px] items-center">
          {["mag","mag","play3","mag","mag"].map((k, i) => <Mini key={i} k={k} />)}
          <div className="w-[13px] h-[13px] flex items-center justify-center border-x border-[#3fae49]"><Mini k="play3" /></div>
        </div>
        <div className="ml-[2px]"><Arrow /></div>
        <div className="ml-[3px] w-[55px] h-[11px] bg-[#3f3f3f] flex items-center pl-[3px]">No Live Surface</div>
        <div className="ml-[7px]"><Sep /></div>
        <div className="ml-[6px]"><Arrow /></div>
        <div className="ml-[3px] w-[55px] h-[11px] bg-[#3f3f3f] flex items-center pl-[3px]">Symmetry: Off</div>
        <div className="ml-[7px]"><Sep /></div>
        <div className="ml-[10.500px]"><Sep /></div>
        <div className="flex gap-[1px] ml-[6px] items-center">
          {["clap","clap","clapd","clapg","disc","clapg","branch","pause"].map((k, i) => <Mini key={i} k={k} />)}
        </div>
        <div className="ml-[4.500px]"><Sep /></div>
        <div className="ml-[12px]"><Sep /></div>
        <div className="ml-[5px] w-[85px] h-[15px] bg-[#575757] flex items-center pl-[5px] pr-[3px] text-[#c8c8c8]">
          <S size={10} className="mr-[3px]"><circle cx="8" cy="5" r="3.200" fill="none" stroke="#ddd" /><path d="M2 15c0-4 3-5 6-5s6 1 6 5" fill="none" stroke="#ddd" /></S>
          <span className="flex-1">Sign In</span>
          <span className="w-0 h-0 border-x-[3px] border-x-transparent border-t-[3px] border-t-[#ddd]" />
        </div>
        <S size={10} className="ml-[1px]"><circle cx="9" cy="7" r="6" fill="none" stroke="#d8d8d8" strokeWidth="1.500" /><circle cx="9" cy="7" r="2.500" fill="#4ea4b6" /><path d="M4 11l-3 4" stroke="#d8d8d8" strokeWidth="2" /></S>
        <div className="ml-auto flex items-center gap-[1.500px] pr-[1px]">
          <S size={11}><path d="M3 3h9v11H3z" fill="#c9c9c9" /><path d="M5 1h8v10" fill="none" stroke="#c9c9c9" /><path d="M5 6h5M5 8h5M5 10h5" stroke="#555" /></S>
          <S size={11}><circle cx="8" cy="2.500" r="1.800" fill="#d0d0d0" /><path d="M1 5.500h14L10 7v8H8.500v-5h-1v5H6V7z" fill="#d0d0d0" /></S>
          <div className="w-[13px] h-[13px] bg-[#4d7d9c] flex items-center justify-center"><S size={11}><path d="M1 2h14v12H1z" fill="none" stroke="#ddd" /><path d="M1 6h14M1 10h14M7 2v12" stroke="#ddd" /></S></div>
          <S size={11}><path d="M2 2h12v12H9M2 6h8M2 10h8M10 2v12" fill="none" stroke="#ccc" strokeDasharray="2 1" /></S>
          <S size={11}><path d="M8 1l6 2.500v9L8 15l-6-2.500v-9z" fill="#c9c9c9" /><path d="M2 6l6 2.500L14 6M2 10l6 2.500 6-2.500" stroke="#555" fill="none" /></S>
        </div>
      </div>
      {/* Shelf */}
      <div className="h-[41px] flex shrink-0 border-b border-[#383838]">
        <Grip className="w-[7px] my-[2px]" />
        <div className="w-[15px] flex flex-col items-center justify-around py-[6px] my-[2px] bg-[#3c3c3c]">
          <div className="w-[6px] h-[2px] bg-[#a8a8a8]" />
          <div className="w-[5px] h-[5px] rounded-full border border-[#a8a8a8]" />
        </div>
        <div className="flex-1 flex flex-col min-w-0">
          <div className="h-[3px]" />
          <div className="h-[10px] bg-[#383838] flex text-[#7f7f7f]">
            {tabs.map((t) => (
              <div key={t} className={`px-[7.500px] pt-[1px] mr-[1px] flex items-center whitespace-nowrap ${t === "Poly Modeling" ? "bg-[#444444] text-[#c9c9c9]" : "bg-[#3f3f3f]"}`}>{t}</div>
            ))}
          </div>
          <div className="flex-1 flex items-center pl-[0.200px] relative">
            {shelfItems.map((k, i) => (
              <div key={i} className="w-[19.600px] flex justify-center items-center shrink-0">
                {k === "|" ? <Sep h="h-[16px]" /> : <ShelfIcon k={k} />}
              </div>
            ))}
            <div className="ml-auto mr-[1px] w-[6px] h-[19px] bg-[#3a3a3a] flex flex-col items-center justify-between py-[1px]">
              <span className="w-0 h-0 border-x-[2.500px] border-x-transparent border-b-[3px] border-b-[#ccc]" />
              <span className="w-[4px] h-[4px] rounded-full bg-[#777]" />
              <span className="w-0 h-0 border-x-[2.500px] border-x-transparent border-t-[3px] border-t-[#ccc]" />
            </div>
          </div>
        </div>
      </div>
      {/* Main */}
      <div className="h-[615px] flex shrink-0 min-h-0">
        {/* Toolbox */}
        <div className="w-[26px] flex flex-col items-center shrink-0">
          <Grip className="w-[22px] h-[3px] mt-[1px]" />
          <div className="h-[3px]" />
          <Tool><S size={16}><path d="M5 1l9 9-4 .5 2.500 4.500-2 1-2.500-4.500L5 14z" fill="#d4d4d4" /></S></Tool>
          <Tool><S size={17}><ellipse cx="7" cy="7" rx="6" ry="4.500" fill="none" stroke={TEAL} strokeDasharray="2 1.400" /><path d="M7 5l8 6-3.500.5 1.500 3-1.500.5-1.500-3L7 13z" fill="#d4d4d4" /><path d="M3 11l2 3" stroke={TEAL} /></S></Tool>
          <Tool><S size={17}><ellipse cx="6.500" cy="10" rx="5.500" ry="4.500" fill="none" stroke={TEAL} strokeDasharray="2 1.400" /><path d="M15.500 1L8 8l-2 2 3 1 2-3z" fill="#d4d4d4" /></S></Tool>
          <Tool><S size={17}><rect x="4.500" y="4.500" width="7" height="7" fill="#d4d4d4" /><path d="M8 .5l2 2.500H6zM8 15.500l2-2.500H6zM.5 8L3 6v4zM15.500 8L13 6v4z" fill={TEAL} /></S></Tool>
          <Tool sel><S size={18}><circle cx="8" cy="8" r="6.500" fill="none" stroke="#36c1d4" strokeWidth="1.100" /><path d="M2 11a7 7 0 0 0 12 1" fill="none" stroke="#2fb4c8" strokeWidth="1.600" /><path d="M8 3.500L12.500 8 8 12.500 3.500 8z" fill="#e6e6e6" /></S></Tool>
          <Tool><S size={16}><rect x="4" y="2" width="10.500" height="10.500" fill="none" stroke={TEAL} strokeDasharray="1.500 1.300" /><rect x="2" y="8" width="6.500" height="6.500" fill="#d4d4d4" /></S></Tool>
          <div className="h-[46.400px]" />
          <div className="w-[20px] h-[1px] bg-[#777]" />
          <div className="h-[4px]" />
          <div className="h-[17px] w-[17px] bg-[#777] border border-[#999] flex items-center justify-center"><S size={11}><path d="M8 2l2 2H6zM8 14l2-2H6zM2 8l2-2v4zM14 8l-2-2v4z" fill="#222" /><circle cx="8" cy="8" r="1.500" fill="#222" /></S></div>
          <div className="h-[4px]" />
          <div className="grid grid-cols-2 gap-[1px] w-[17px] h-[16px]">
            <div className="border border-[#666]" /><div className="bg-[#999]" /><div className="border border-[#666]" /><div className="border border-[#666]" />
          </div>
          <div className="h-[5px]" />
          <div className="grid grid-cols-2 gap-[1px] w-[17px] h-[15px]"><div className="border border-[#666]" /><div className="bg-[#aaa]" /></div>
          <div className="h-[4px]" />
          <div className="w-[21px] h-[21px] bg-[#4d7d9c] flex items-center justify-center"><S size={15}><rect x="1" y="1" width="14" height="14" fill="#444" stroke="#ccc" /><path d="M3 4h5M5 7h6M5 10h5M5 13h4M3 4v9" stroke="#b8d8e8" /></S></div>
          <div className="h-[3px]" />
          <div className="w-[20px] h-[1px] bg-[#777]" />
          <div className="h-[4px]" />
          <S size={14}><circle cx="6.500" cy="6.500" r="4.500" fill="none" stroke="#d0d0d0" strokeWidth="1.300" /><path d="M10 10l4.500 4.500" stroke="#d0d0d0" strokeWidth="1.800" /></S>
          <div className="flex-1" />
          <div className="w-[17px] h-[18px] mb-[3px] rounded-[2px] bg-[#2aa3c4] flex flex-col items-center justify-end overflow-hidden">
            <span className="text-[11px] font-bold text-white leading-[12px]">M</span>
            <div className="w-full h-[5px] bg-[#1b6b84]" />
          </div>
        </div>
        {/* Outliner */}
        <div className="w-[149px] flex flex-col shrink-0 pb-[4px]">
          <div className="h-[11px] flex items-end pt-[1px] bg-[#3a3a3a] shrink-0">
            <div className="ml-[1px] w-[39px] h-[10px] bg-[#444444] flex items-center justify-center text-[#cfcfcf]">Outliner</div>
          </div>
          <div className="h-[12px] flex items-center gap-[8px] pl-[5px] text-[#b5b5b5] shrink-0"><span>Display</span><span>Show</span><span>Help</span></div>
          <div className="h-[11px] flex items-center pl-[4px] shrink-0">
            <div className="w-[8px] h-[8px] border border-dashed border-[#888] mr-[5px]" />
            <div className="w-[128px] h-[10px] bg-[#2f2f2f] flex items-center pl-[2px] text-[#777]"><span className="flex-1">Search...</span><span className="mr-[2px] w-0 h-0 border-x-[3px] border-x-transparent border-t-[3px] border-t-[#ddd]" /></div>
          </div>
          <div className="flex-1 flex min-h-0 mt-[1px]">
            <div className="w-[140px] bg-[#393939] pt-[1px] flex flex-col">
              {outl.map((r) => (
                <div key={r.n} className="h-[11.270px] flex items-center shrink-0">
                  <div className="w-[19px] flex justify-end shrink-0">{r.p ? <div className="w-[5px] h-[5px] border border-[#8a8a8a] mr-[0.500px] relative"><div className="absolute left-0 top-[1px] w-[3px] h-[1px] bg-[#8a8a8a]" /></div> : null}</div>
                  <div className="w-[12px] flex justify-center shrink-0"><OutIcon t={r.t} /></div>
                  <span className={`ml-[1px] ${r.d ? "text-[#6e6e6e]" : "text-[#c8c8c8]"}`}>{r.n}</span>
                </div>
              ))}
              <div className="flex-1" />
              <div className="h-[10px] bg-[#414141] flex items-center px-[2px] gap-[2px]"><span className="w-0 h-0 border-y-[2.500px] border-y-transparent border-r-[3px] border-r-[#ccc]" /><div className="h-[5px] flex-1 rounded-full bg-[#777]" /><span className="w-0 h-0 border-y-[2.500px] border-y-transparent border-l-[3px] border-l-[#ccc]" /></div>
            </div>
            <div className="w-[9px] bg-[#414141] flex flex-col items-center py-[2px]">
              <span className="w-0 h-0 border-x-[2.500px] border-x-transparent border-b-[3px] border-b-[#ccc]" />
              <div className="w-[6px] flex-1 my-[2px] rounded-full bg-[#777]" />
              <span className="w-0 h-0 border-x-[2.500px] border-x-transparent border-t-[3px] border-t-[#ccc]" />
              <div className="h-[9px]" />
            </div>
          </div>
        </div>
        {/* Viewport */}
        <div className="w-[991px] ml-[2px] flex flex-col shrink-0 border border-[#7c7c7c] mb-[1px]">
          <div className="h-[12px] flex items-center gap-[9px] pl-[4px] pt-[1px] text-[#c0c0c0]">
            {["View","Shading","Lighting","Show","Renderer","Panels"].map((m) => <span key={m}>{m}</span>)}
          </div>
          <div className="h-[11px] flex items-center pl-[0.500px] shrink-0">
            {vt.map((t, i) => t.k === "|" ? (
              <div key={i} className="w-[6.600px] flex justify-center shrink-0"><div className="w-[1.500px] h-[9px] bg-[#7a7a7a]" /></div>
            ) : (
              <div key={i} className={`w-[10.600px] h-[11px] flex items-center justify-center shrink-0 ${t.sel ? "bg-[#4d7d9c]" : ""}`}><Tiny k={t.k} /></div>
            ))}
            <div className="w-[21px] h-[9px] bg-[#2f2f2f] ml-[1px] flex items-center justify-center text-[#c8c8c8]">0.00</div>
            <div className="w-[13px] flex justify-center"><div className="w-[6px] h-[8px] rounded-l-full bg-[#ddd]" /></div>
            <div className="w-[21px] h-[9px] bg-[#2f2f2f] flex items-center justify-center text-[#c8c8c8]">1.00</div>
            <div className="ml-[2px] w-[11px] h-[10px] bg-[#3c7c9c] flex items-center justify-center"><div className="w-[7px] h-[7px] rounded-full border border-[#bde]" /></div>
            <div className="ml-[2px]"><Combo text="ACES 1.0 SDR-video (sRGB)" cls="w-[111px] h-[10px] text-[#c8c8c8]" /></div>
          </div>
          <div className="flex-1 relative min-h-0">
            <Scene />
            <div className="absolute left-[942px] top-[20px] w-[28px] h-[28px] flex items-center justify-center text-[5.500px] font-bold text-[#5f5f5f] font-['Liberation_Sans',sans-serif]">RIGHT</div>
            <div className="absolute left-[483px] top-[579px] text-[#dcdcdc] font-semibold text-[6.2px]">persp</div>
          </div>
        </div>
        {/* Attribute Editor */}
        <div className="w-[261px] ml-[3px] flex flex-col shrink-0">
          <div className="h-[16px] flex items-center pl-[6px] pt-[3px] gap-[7.500px] text-[#b8b8b8] shrink-0">
            {["List","Selected","Focus","Attributes","Display","Show","Help"].map((m) => <span key={m}>{m}</span>)}
            <S size={7} className="ml-auto mr-[6px]"><path d="M10 1l5 5-3 1-3 4-2-2 4-4zM6 9l-5 6" fill="#ccc" stroke="#ccc" /></S>
          </div>
          <div className="flex-1 flex items-center justify-center font-semibold text-[#c0c0c0] text-[6.1px]">Select an object in the scene to view and edit its attributes</div>
          <div className="h-[15px] mb-[1px] flex text-[#6f6f6f] mr-[1px] gap-[1px] shrink-0">
            <div className="flex-1 bg-[#4a4a4a] flex items-center justify-center">Select</div>
            <div className="flex-1 bg-[#555555] flex items-center justify-center text-[#c9c9c9]">Load Attributes</div>
            <div className="flex-1 bg-[#4a4a4a] flex items-center justify-center">Copy Tab</div>
          </div>
        </div>
        {/* Side tabs */}
        <div className="w-[8px] flex flex-col shrink-0 bg-[#3a3a3a] pt-[8px] text-[#787878] leading-[8px]">
          <div className="h-[85px] shrink-0 flex justify-center [writing-mode:vertical-rl] whitespace-nowrap items-center">Channel Box / Layer Editor</div>
          <div className="h-[62px] shrink-0 flex justify-center [writing-mode:vertical-rl] whitespace-nowrap items-center bg-[#444444] text-[#cfcfcf]">Attribute Editor</div>
          <div className="h-[66px] shrink-0 flex justify-center [writing-mode:vertical-rl] whitespace-nowrap items-center">Modeling Toolkit</div>
        </div>
      </div>
      {/* Time slider */}
      <div className="h-[30px] flex shrink-0 relative">
        <div className="w-[8px]"><Grip className="w-[5px] h-full" /></div>
        <div className="w-[1269px] flex flex-col pt-[1px]">
          <div className="h-[4px] ml-[15.300px] flex">
            {Array.from({ length: 59 }).map((_, i) => <div key={i} className="w-[21px] shrink-0 bg-[#4f4f4f] border-r border-[#3a3a3a]" />)}
          </div>
          <div className="h-[18px] bg-[#2b2b2b] flex pl-[15.300px]">
            {Array.from({ length: 60 }).map((_, i) => (
              <div key={i} className="w-[21px] h-full shrink-0 relative text-[#a0a0a0]">
                <span className="absolute left-[3.500px] top-[1px]">{(i + 1) * 2}</span>
                <div className="absolute left-0 bottom-0 w-[1px] h-[9px] bg-[#8a8a8a]" />
              </div>
            ))}
          </div>
          <div className="h-[5px] bg-[#3b3b3b] border-t border-[#505050]" />
        </div>
        <div className="absolute left-[13px] top-[1px] w-[10px] h-[27px] bg-[#555555] flex items-end justify-center pb-[6px]">
          <span className="text-[#ddd] bg-[#3a3a3a] px-[1px]">1</span>
        </div>
        <div className="ml-[5px] mt-[9px] w-[28px] h-[11px] bg-[#2f2f2f] flex items-center pl-[4px] text-[#c8c8c8]">1</div>
        <div className="flex items-center ml-[2px] gap-0 h-[29px]">
          {[
            "M2 3v10M9 3L4 8l5 5zM15 3l-5 5 5 5z",
            "M3 3v10M13 3L6 8l7 5z",
            "M13 3L6 8l7 5z",
            "M13 2L3 8l10 6z",
            "M3 2l10 6-10 6z",
            "M3 3l7 5-7 5z",
            "M3 3l7 5-7 5zM13 3v10",
            "M1 3l5 5-5 5zM7 3l5 5-5 5zM14 3v10",
          ].map((d, i) => (
            <div key={i} className="w-[15.700px] flex justify-center shrink-0 relative">
              {(i === 2 || i === 5) && <div className={`absolute top-[-1px] w-[2px] h-[10px] bg-[#d07a3e] ${i === 2 ? "left-[4px]" : "right-[3px]"}`} />}
              <S size={i === 3 || i === 4 ? 11 : 8}><path d={d} fill="#c9c9c9" stroke="#c9c9c9" strokeWidth="1" /></S>
            </div>
          ))}
        </div>
      </div>
      {/* Range slider */}
      <div className="h-[20px] pt-[1px] flex items-center shrink-0 border-y border-[#3a3a3a]">
        <div className="w-[8px] h-full"><Grip className="w-[5px] h-full" /></div>
        <div className="ml-[1px] w-[28px] h-[11px] bg-[#2f2f2f] flex items-center pl-[4px] text-[#c8c8c8]">1</div>
        <div className="ml-[6px] w-[973px] h-[11px] bg-[#2e2e2e] flex relative">
          <div className="w-[587px] h-full bg-[#4b4b4b] flex items-center text-[#bcbcbc] relative">
            <div className="w-[5px] h-full bg-[#a9a9a9]" />
            <span className="ml-[4px]">1</span>
            <span className="ml-auto mr-[8px]">120</span>
            <div className="w-[4px] h-full bg-[#a9a9a9]" />
          </div>
        </div>
        <div className="ml-[5px] w-[28px] h-[11px] bg-[#2f2f2f] flex items-center pl-[4px] text-[#c8c8c8]">200</div>
        <div className="ml-[11px]"><Sep h="h-[10px]" /></div>
        <S size={10} className="ml-[13px]"><path d="M3 1h7v14l-3.500-3L3 15z" fill="#e0703a" /><path d="M11 2v5M9 4.500h5" stroke="#ddd" /></S>
        <div className="ml-[12px]"><Sep h="h-[10px]" /></div>
        <div className="ml-[14px]"><Arrow /></div>
        <div className="ml-[4px] w-[57px] h-[11px] bg-[#3f3f3f] border border-[#4d4d4d] flex items-center pl-[2px]">No Character Set</div>
        <div className="ml-[8px]"><Arrow /></div>
        <div className="ml-[3px] w-[57px] h-[11px] bg-[#3f3f3f] border border-[#4d4d4d] flex items-center pl-[3px]">No Anim Layer</div>
        <div className="ml-[11px]"><Sep h="h-[10px]" /></div>
        <div className="ml-[13px]"><Combo text="24 fps" cls="w-[53px] h-[11px]" /></div>
        <S size={10} className="ml-[8px]"><path d="M5 3h6a4 4 0 0 1 0 9H5a4 4 0 0 1 0-9z" fill="none" stroke="#ddd" strokeWidth="1.500" /></S>
        <div className="ml-[7px] w-[12px] h-[12px] border border-[#3e97c6] bg-[#8a5a38] flex items-center justify-center"><S size={9}><rect x="1" y="5" width="14" height="9" fill="#d4844a" /><path d="M3 8h10M3 11h10" stroke="#444" /><rect x="10" y="1" width="4" height="3" fill="#ddd" /></S></div>
        <div className="ml-[10px]"><Sep h="h-[10px]" /></div>
        <S size={10} className="ml-[12px]"><path d="M1 6h3l5-4v12l-5-4H1z" fill="#cfcfcf" /><path d="M11 5a4 4 0 0 1 0 6M13 3a7 7 0 0 1 0 10" fill="none" stroke="#cfcfcf" /></S>
        <div className="ml-[6px] w-[12px] h-[12px] bg-[#c43a3f] flex items-center justify-center"><S size={9}><circle cx="8" cy="8" r="6" fill="none" stroke="#555" strokeWidth="1.500" strokeDasharray="3 1.500" /><circle cx="8" cy="8" r="2" fill="#a34" /></S></div>
        <S size={11} className="ml-[4.500px]"><circle cx="8" cy="3" r="2" fill="#d98e4f" /><path d="M3 7l5-1 4 2M8 6l-1 5-4 4M7 11l5 3M13 2l-2 3" stroke="#d98e4f" strokeWidth="1.500" fill="none" /></S>
      </div>
      {/* Command line */}
      <div className="flex-1 flex items-center pt-[2px] min-h-0">
        <div className="w-[8px] h-full"><Grip className="w-[5px] h-full" /></div>
        <div className="ml-[1px] w-[9px] h-[9px] rounded-full bg-[#84b03a] flex items-center justify-center text-[7px] font-bold text-[#2f2f2f]">?</div>
        <span className="ml-[4px] w-[600px] text-[#bcbcbc]">Rotate Tool: Select an object to rotate.</span>
        <span className="w-[16px] text-[#cfcfcf]">MEL</span>
        <div className="w-[306px] h-[12px] bg-[#2f2f2f]" />
        <div className="ml-[2px] w-[474px] h-[12px] bg-[#2f2f2f]" />
        <S size={11} className="ml-[4px]"><rect x="1" y="2" width="14" height="12" fill="none" stroke="#bdbdbd" strokeWidth="1.200" /><path d="M1 5h14M5 6v8M8 6v8M11 6v8" stroke="#bdbdbd" /></S>
      </div>
    </div>
  );
}
